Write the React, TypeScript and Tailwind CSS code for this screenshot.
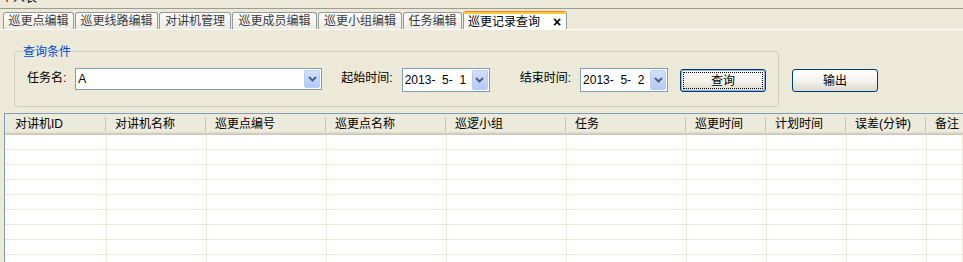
const tabs = [
  { label: "巡更点编辑", w: "w-[71px]" },
  { label: "巡更线路编辑", w: "w-[83px]" },
  { label: "对讲机管理", w: "w-[72px]" },
  { label: "巡更成员编辑", w: "w-[85px]" },
  { label: "巡更小组编辑", w: "w-[84px]" },
  { label: "任务编辑", w: "w-[59px]" },
];

const headCols = [
  { label: "对讲机ID", w: "w-[101px] pl-[10px]" },
  { label: "对讲机名称", w: "w-[100px] pl-[9px]" },
  { label: "巡更点编号", w: "w-[120px] pl-[9px]" },
  { label: "巡更点名称", w: "w-[120px] pl-[9px]" },
  { label: "巡逻小组", w: "w-[120px] pl-[9px]" },
  { label: "任务", w: "w-[120px] pl-[9px]" },
  { label: "巡更时间", w: "w-[80px] pl-[9px]" },
  { label: "计划时间", w: "w-[80px] pl-[9px]" },
  { label: "误差(分钟)", w: "w-[80px] pl-[9px]" },
  { label: "备注", w: "w-[60px] pl-[9px]" },
];

const bodyCols = [
  "w-[102px]",
  "w-[100px]",
  "w-[120px]",
  "w-[120px]",
  "w-[120px]",
  "w-[120px]",
  "w-[80px]",
  "w-[80px]",
  "w-[80px]",
  "flex-1",
];

function DropButton({ h }: { h: string }) {
  return (
    <div
      className={`flex ${h} w-[16px] shrink-0 items-center justify-center rounded-[2px] border border-[#B9CCF6] bg-gradient-to-b from-[#D3E0FD] to-[#B4C9F7]`}
    >
      <svg width="9" height="6" viewBox="0 0 9 6">
        <path d="M1 1 L4.5 4.5 L8 1" fill="none" stroke="#4D6185" strokeWidth="2" />
      </svg>
    </div>
  );
}

function DateBox({ value }: { value: string }) {
  return (
    <div className="flex h-[24px] w-[88px] shrink-0 items-center border border-[#7F9DB9] bg-white pl-[2px] pr-[1px]">
      <span className="flex-1 whitespace-pre text-[12px] leading-[14px] text-black">{value}</span>
      <DropButton h="h-[20px]" />
    </div>
  );
}

function XpButton({ label, focused }: { label: string; focused?: boolean }) {
  return (
    <div
      className={`flex h-[23px] w-[86px] shrink-0 items-center justify-center rounded-[3px] border border-[#003C74] bg-gradient-to-b from-white via-[#F5F4EF] to-[#DCD8CC] p-[2px] ${
        focused ? "shadow-[inset_0_0_0_1px_#8DB2E3]" : ""
      }`}
    >
      <div
        className={`flex h-full w-full items-center justify-center text-[12px] leading-[14px] text-black ${
          focused ? "border border-dotted border-black" : ""
        }`}
      >
        {label}
      </div>
    </div>
  );
}

export default function App() {
  return (
    <div className="h-[262px] w-[963px] overflow-hidden bg-[#ECE9D8] font-['Liberation_Sans','Noto_Sans_CJK_SC',sans-serif] text-black">
      {/* cut-off window text */}
      <div className="h-[8px] overflow-hidden pl-[1px]">
        <div className="-mt-[9px] text-[12px] leading-[14px]">个人表</div>
      </div>
      <div className="h-px bg-[#9D9C94]" />

      {/* tab strip */}
      <div className="flex h-[20px] items-end gap-[1px] pl-[3px]">
        {tabs.map((t) => (
          <div
            key={t.label}
            className={`flex h-[17px] ${t.w} shrink-0 items-center justify-center whitespace-nowrap rounded-t-[3px] border border-b-0 border-[#919B9C] bg-gradient-to-b from-white to-[#EBEAE3] text-[12px] leading-[14px] text-[#3A3A3A]`}
          >
            {t.label}
          </div>
        ))}
        <div className="flex h-[18px] w-[104px] shrink-0 flex-col rounded-t-[3px] border border-b-0 border-[#919B9C] border-t-[#E68B2C] bg-white">
          <div className="h-[2px] bg-[#FFC83C]" />
          <div className="flex flex-1 items-center whitespace-nowrap pl-[4px] text-[12px] leading-[14px]">
            <span>巡更记录查询</span>
            <span className="ml-[13px] text-[14px] font-bold leading-[14px]">×</span>
          </div>
        </div>
      </div>
      <div className="h-px bg-white" />

      {/* query group */}
      <div className="mt-[21px] ml-[14px] h-[56px] w-[765px] rounded-[4px] border border-[#D0D0BF]">
        <div className="-mt-[7px] ml-[7px] w-fit bg-[#ECE9D8] px-[1px] text-[12px] leading-[14px] text-[#0046D5]">
          查询条件
        </div>
        <div className="mt-[9px] flex items-start whitespace-nowrap pl-[12px]">
          <span className="mt-[3px] shrink-0 text-[12px] leading-[14px]">任务名:</span>
          <div className="ml-[9px] flex h-[22px] w-[247px] shrink-0 items-center border border-[#7F9DB9] bg-white pl-[2px] pr-[1px]">
            <span className="flex-1 text-[12px] leading-[14px]">A</span>
            <DropButton h="h-[18px]" />
          </div>
          <span className="ml-[19px] mt-[3px] shrink-0 text-[12px] leading-[14px]">起始时间:</span>
          <div className="ml-[9px] shrink-0">
            <DateBox value="2013-  5-  1" />
          </div>
          <span className="ml-[30px] mt-[3px] shrink-0 text-[12px] leading-[14px]">结束时间:</span>
          <div className="ml-[9px] shrink-0">
            <DateBox value="2013-  5-  2" />
          </div>
          <div className="ml-[12px] mt-[1px] shrink-0">
            <XpButton label="查询" focused />
          </div>
          <div className="ml-[26px] mt-[1px] shrink-0">
            <XpButton label="输出" />
          </div>
        </div>
      </div>

      {/* table */}
      <div className="mt-[6px] ml-[4px] border-l border-t border-[#7F9DB9] bg-white">
        <div className="flex h-[21px] bg-[#EBEADB] shadow-[inset_0_-1px_0_#CBC7B8,inset_0_-2px_0_#D6D2C2,inset_0_-3px_0_#E2DECD]">
          {headCols.map((c) => (
            <div
              key={c.label}
              className={`flex ${c.w} shrink-0 items-center justify-between whitespace-nowrap pb-[2px] text-[12px] leading-[14px]`}
            >
              <span>{c.label}</span>
              <span className="h-[14px] w-px bg-[#C7C5B2]" />
            </div>
          ))}
        </div>
        {Array.from({ length: 9 }).map((_, r) => (
          <div key={r} className="flex h-[15px]">
            {bodyCols.map((w, i) => (
              <div key={i} className={`${w} shrink-0 border-r border-b border-[#EBE8D6]`} />
            ))}
          </div>
        ))}
      </div>
    </div>
  );
}
